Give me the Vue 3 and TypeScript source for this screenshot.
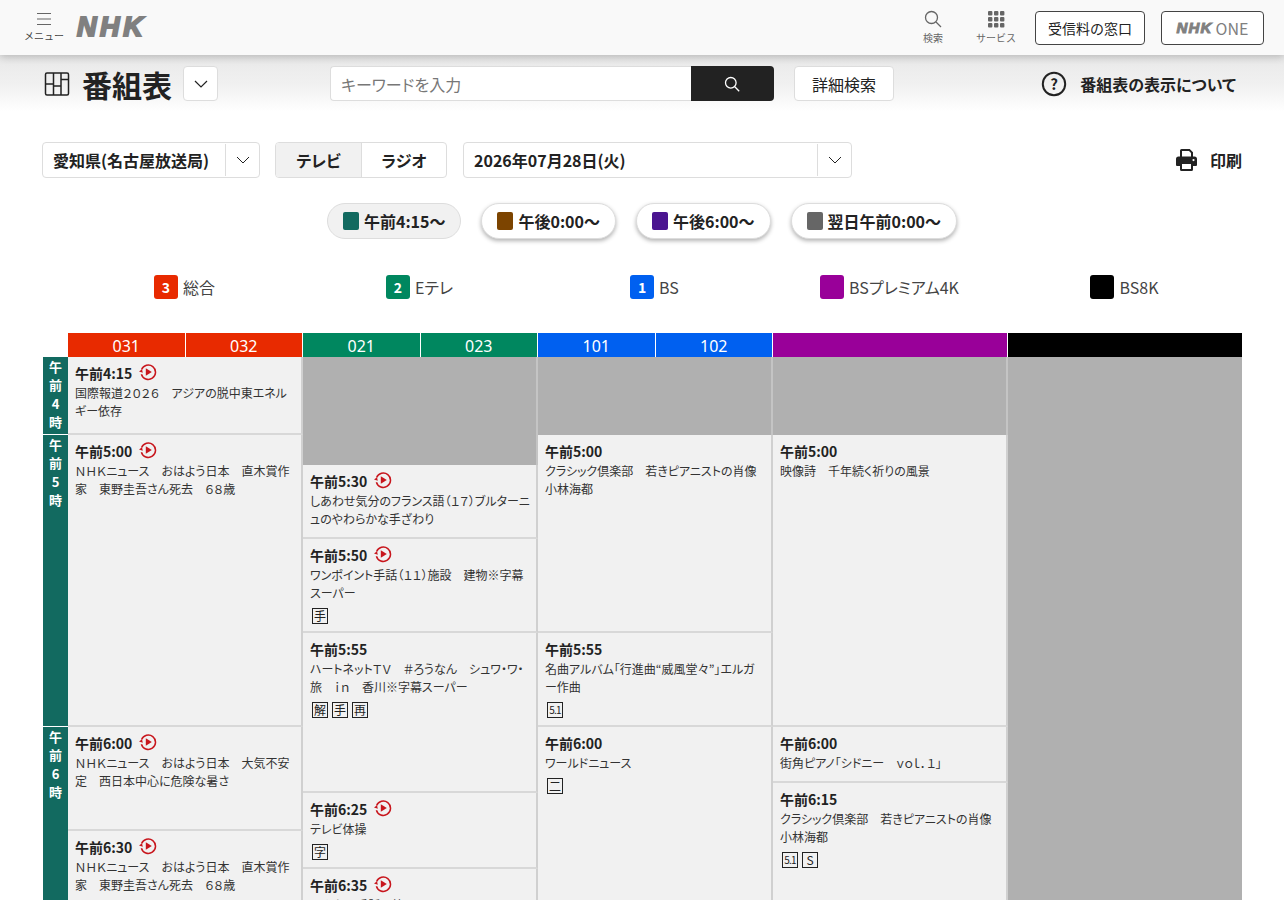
<script setup lang="ts">
interface Program {
  col: number
  from: string
  to: string
  time?: string
  title?: string
  replay?: boolean
  badges?: string[]
}

const rows = ['t415', 't500', 't530', 't550', 't555', 't600', 't615', 't625', 't630', 't635', 'end']
const rowHeights = [78, 30, 74, 94, 94, 56, 10, 38, 38, 38, 100]
const gridRows = rows.map((r, i) => `[${r}] ${rowHeights[i]}px`).join(' ') + ' [last]'

const hours = [
  { chars: ['午', '前', '4', '時'], from: 't415', to: 't500' },
  { chars: ['午', '前', '5', '時'], from: 't500', to: 't600' },
  { chars: ['午', '前', '6', '時'], from: 't600', to: 'last' },
]

const channels = [
  { color: '#e82a00', nums: ['031', '032'] },
  { color: '#00875f', nums: ['021', '023'] },
  { color: '#0060f0', nums: ['101', '102'] },
  { color: '#990099', nums: [] },
  { color: '#000000', nums: [] },
]

const legend = [
  { num: '3', name: '総合', color: '#e82a00' },
  { num: '2', name: 'Eテレ', color: '#00875f' },
  { num: '1', name: 'BS', color: '#0060f0' },
  { num: '', name: 'BSプレミアム4K', color: '#990099' },
  { num: '', name: 'BS8K', color: '#000000' },
]

const pills = [
  { label: '午前4:15〜', color: '#126a60', active: true },
  { label: '午後0:00〜', color: '#7c4400', active: false },
  { label: '午後6:00〜', color: '#4b1490', active: false },
  { label: '翌日午前0:00〜', color: '#666666', active: false },
]

const programs: Program[] = [
  { col: 1, from: 't415', to: 't500', time: '午前4:15', replay: true, title: '国際報道２０２６　アジアの脱中東エネルギー依存' },
  { col: 1, from: 't500', to: 't600', time: '午前5:00', replay: true, title: 'ＮＨＫニュース　おはよう日本　直木賞作家　東野圭吾さん死去　６８歳' },
  { col: 1, from: 't600', to: 't630', time: '午前6:00', replay: true, title: 'ＮＨＫニュース　おはよう日本　大気不安定　西日本中心に危険な暑さ' },
  { col: 1, from: 't630', to: 'last', time: '午前6:30', replay: true, title: 'ＮＨＫニュース　おはよう日本　直木賞作家　東野圭吾さん死去　６８歳' },
  { col: 2, from: 't415', to: 't530' },
  { col: 2, from: 't530', to: 't550', time: '午前5:30', replay: true, title: 'しあわせ気分のフランス語（１７）ブルターニュのやわらかな手ざわり' },
  { col: 2, from: 't550', to: 't555', time: '午前5:50', replay: true, title: 'ワンポイント手話（１１）施設　建物※字幕スーパー', badges: ['手'] },
  { col: 2, from: 't555', to: 't625', time: '午前5:55', title: 'ハートネットＴＶ　＃ろうなん　シュワ・ワ・旅　ｉｎ　香川※字幕スーパー', badges: ['解', '手', '再'] },
  { col: 2, from: 't625', to: 't635', time: '午前6:25', replay: true, title: 'テレビ体操', badges: ['字'] },
  { col: 2, from: 't635', to: 'last', time: '午前6:35', replay: true, title: 'みんなの手話　第１１回' },
  { col: 3, from: 't415', to: 't500' },
  { col: 3, from: 't500', to: 't555', time: '午前5:00', title: 'クラシック倶楽部　若きピアニストの肖像　小林海都' },
  { col: 3, from: 't555', to: 't600', time: '午前5:55', title: '名曲アルバム「行進曲“威風堂々”」エルガー作曲', badges: ['5.1'] },
  { col: 3, from: 't600', to: 'last', time: '午前6:00', title: 'ワールドニュース', badges: ['二'] },
  { col: 4, from: 't415', to: 't500' },
  { col: 4, from: 't500', to: 't600', time: '午前5:00', title: '映像詩　千年続く祈りの風景' },
  { col: 4, from: 't600', to: 't615', time: '午前6:00', title: '街角ピアノ「シドニー　ｖｏｌ．１」' },
  { col: 4, from: 't615', to: 'last', time: '午前6:15', title: 'クラシック倶楽部　若きピアニストの肖像　小林海都', badges: ['5.1', 'S'] },
  { col: 5, from: 't415', to: 'last' },
]

function cellStyle(p: { col?: number, from: string, to: string }) {
  return {
    gridColumn: p.col ? String(p.col + 1) : '1',
    gridRow: `${p.from} / ${p.to}`,
  }
}
</script>

<template>
  <div class="page">
    <header class="topbar">
      <div class="topbar__left">
        <div class="nav-item nav-item--menu">
          <svg width="16" height="14" viewBox="0 0 16 14" fill="none" stroke="#666" stroke-width="1.2">
            <path d="M1 1.5h14M1 7h14M1 12.5h14" />
          </svg>
          <span>メニュー</span>
        </div>
        <span class="logo">NHK</span>
      </div>
      <div class="topbar__right">
        <div class="nav-item nav-item--search">
          <svg width="18" height="18" viewBox="0 0 18 18" fill="none" stroke="#666" stroke-width="1.3">
            <circle cx="7.5" cy="7.5" r="6" />
            <path d="M12 12l5 5" />
          </svg>
          <span>検索</span>
        </div>
        <div class="nav-item nav-item--service">
          <svg width="18" height="18" viewBox="0 0 18 18" fill="#666">
            <rect v-for="n in 9" :key="n" :x="1 + ((n - 1) % 3) * 6" :y="1 + Math.floor((n - 1) / 3) * 6" width="4.4" height="4.4" rx="1" />
          </svg>
          <span>サービス</span>
        </div>
        <button class="top-btn top-btn--fee">受信料の窓口</button>
        <button class="top-btn top-btn--one"><span class="logo logo--small">NHK</span><span class="one">ONE</span></button>
      </div>
    </header>

    <section class="subhead">
      <div class="subhead__title">
        <svg width="26" height="26" viewBox="0 0 26 26" fill="none" stroke="#222" stroke-width="1.5">
          <rect x="1.5" y="2" width="23" height="22" rx="1.5" />
          <path d="M9.5 2v22M17 2v22M1.5 13h8M9.5 15h7.5M17 8.5h7.5" />
        </svg>
        <h1>番組表</h1>
        <button class="icon-btn">
          <svg width="14" height="8" viewBox="0 0 14 8" fill="none" stroke="#222" stroke-width="1.2"><path d="M1 1l6 6 6-6" /></svg>
        </button>
      </div>
      <div class="search">
        <input class="search__input" placeholder="キーワードを入力">
        <button class="search__btn">
          <svg width="16" height="16" viewBox="0 0 16 16" fill="none" stroke="#fff" stroke-width="1.3">
            <circle cx="6.8" cy="6.8" r="5.3" />
            <path d="M10.8 10.8l4.4 4.4" />
          </svg>
        </button>
      </div>
      <button class="detail-btn">詳細検索</button>
      <div class="about">
        <svg width="26" height="26" viewBox="0 0 26 26">
          <circle cx="13" cy="13" r="11.2" fill="none" stroke="#222" stroke-width="2" />
          <text x="13" y="18.5" text-anchor="middle" font-size="15" font-weight="700" fill="#222">?</text>
        </svg>
        <span>番組表の表示について</span>
      </div>
    </section>

    <section class="controls">
      <div class="select select--area">
        <span class="select__value">愛知県(名古屋放送局)</span>
        <span class="select__arrow">
          <svg width="14" height="8" viewBox="0 0 14 8" fill="none" stroke="#222" stroke-width="1"><path d="M1 1l6 6 6-6" /></svg>
        </span>
      </div>
      <div class="tabs">
        <span class="tabs__item tabs__item--active">テレビ</span>
        <span class="tabs__item">ラジオ</span>
      </div>
      <div class="select select--date">
        <span class="select__value">2026年07月28日(火)</span>
        <span class="select__arrow">
          <svg width="14" height="8" viewBox="0 0 14 8" fill="none" stroke="#222" stroke-width="1"><path d="M1 1l6 6 6-6" /></svg>
        </span>
      </div>
      <div class="print">
        <svg width="21" height="22" viewBox="0 0 21 22">
          <path fill="#222" d="M4 1.5A1.5 1.5 0 0 1 5.5 0h8.2L17 3.2V8h-2V4l-2-2H6v6H4z" />
          <path fill="#222" d="M2.5 7.5h16A2.5 2.5 0 0 1 21 10v6a1 1 0 0 1-1 1h-3v3.5a1.5 1.5 0 0 1-1.5 1.5h-10A1.5 1.5 0 0 1 4 20.5V17H1a1 1 0 0 1-1-1v-6a2.5 2.5 0 0 1 2.5-2.5zM6 15v5h9v-5zM17.5 10a1.1 1.1 0 1 0 0 2.2 1.1 1.1 0 0 0 0-2.2z" fill-rule="evenodd" />
        </svg>
        <span>印刷</span>
      </div>
    </section>

    <nav class="pills">
      <span v-for="p in pills" :key="p.label" class="pill" :class="{ 'pill--active': p.active }">
        <i class="pill__swatch" :style="{ background: p.color }" />{{ p.label }}
      </span>
    </nav>

    <div class="legend">
      <div v-for="l in legend" :key="l.name" class="legend__item">
        <span class="legend__badge" :style="{ background: l.color }">{{ l.num }}</span>
        <span>{{ l.name }}</span>
      </div>
    </div>

    <div class="table">
      <div class="channels">
        <div v-for="(c, i) in channels" :key="i" class="channel" :style="{ background: c.color }">
          <span v-for="n in c.nums" :key="n" class="channel__num">{{ n }}</span>
        </div>
      </div>
      <div class="schedule" :style="{ gridTemplateRows: gridRows }">
        <div v-for="h in hours" :key="h.from" class="hour" :style="cellStyle(h)">
          <span v-for="(c, i) in h.chars" :key="i">{{ c }}</span>
        </div>
        <template v-for="(p, i) in programs" :key="i">
          <article v-if="p.time" class="prog" :style="cellStyle(p)">
            <div class="prog__time">
              {{ p.time }}
              <svg v-if="p.replay" class="prog__replay" width="18" height="18" viewBox="0 0 18 18">
                <path d="M2.6 6.6A7.2 7.2 0 1 1 2.4 11.2" fill="none" stroke="#c8161d" stroke-width="1.5" />
                <path d="M0 8.6l3-2.4 0.8 3.6z" fill="#c8161d" />
                <path d="M6.8 5.2l6 3.8-6 3.8z" fill="#c8161d" />
              </svg>
            </div>
            <p class="prog__title">{{ p.title }}</p>
            <div v-if="p.badges" class="prog__badges">
              <span v-for="b in p.badges" :key="b" class="badge" :class="{ 'badge--tiny': b === '5.1' }">{{ b }}</span>
            </div>
          </article>
          <div v-else class="blank" :class="{ 'blank--last': p.col === 5 }" :style="cellStyle(p)" />
        </template>
      </div>
    </div>
  </div>
</template>

<style>
html, body {
  margin: 0;
  overflow: hidden;
}
</style>

<style scoped>
.page {
  height: 900px;
  overflow: hidden;
  background: #fff;
  color: #222;
  font-family: "Noto Sans CJK JP", "Noto Sans", sans-serif;
  font-feature-settings: "palt";
}

button {
  font-family: inherit;
  font-feature-settings: inherit;
  cursor: pointer;
}

.topbar {
  position: relative;
  z-index: 2;
  display: flex;
  align-items: center;
  justify-content: space-between;
  height: 55px;
  padding: 0 20px 0 24px;
  box-sizing: border-box;
  background: #f9f9f9;
  box-shadow: 0 2px 8px rgba(0, 0, 0, 0.22);
}

.topbar__left,
.topbar__right {
  display: flex;
  align-items: center;
}

.nav-item {
  display: flex;
  flex-direction: column;
  align-items: center;
  gap: 3px;
  font-feature-settings: normal;
  font-size: 10px;
  line-height: 14px;
  color: #666;
}

.nav-item--menu {
  width: 40px;
  color: #444;
}

.nav-item--search {
  margin-right: 33px;
}

.nav-item--service {
  margin-right: 19px;
}

.logo {
  margin-left: 13px;
  font-family: "Liberation Sans", sans-serif;
  font-size: 27px;
  font-style: italic;
  font-weight: 700;
  line-height: 1;
  letter-spacing: 3.6px;
  color: #808080;
  -webkit-text-stroke: 2px #808080;
}

.logo--small {
  margin-left: 0;
  font-size: 15px;
  letter-spacing: 1.2px;
  -webkit-text-stroke: 1px #808080;
}

.one {
  margin-left: 3px;
  font-size: 16px;
  color: #808080;
}

.top-btn {
  display: flex;
  align-items: center;
  justify-content: center;
  height: 34px;
  padding: 0;
  border: 1px solid #444;
  border-radius: 4px;
  background: #fff;
  font-feature-settings: normal;
  font-size: 14px;
  color: #222;
}

.top-btn--fee {
  width: 110px;
  margin-right: 16px;
}

.top-btn--one {
  width: 103px;
}

.subhead {
  display: flex;
  align-items: center;
  height: 57px;
  padding: 0 48px 0 44px;
  box-sizing: border-box;
  background: linear-gradient(#e9e9e9, #f0f0f0 50%, #fff);
}

.subhead__title {
  display: flex;
  align-items: center;
  width: 286px;
}

.subhead__title h1 {
  margin: 0 11px 0 12px;
  font-size: 30px;
  font-weight: 700;
  line-height: 40px;
  color: #222;
}

.icon-btn {
  display: flex;
  align-items: center;
  justify-content: center;
  width: 35px;
  height: 35px;
  padding: 0;
  border: 1px solid #ddd;
  border-radius: 4px;
  background: #fff;
}

.search {
  display: flex;
  height: 35px;
  margin-right: 20px;
}

.search__input {
  width: 361px;
  padding: 0 10px;
  box-sizing: border-box;
  border: 1px solid #ddd;
  border-right: none;
  border-radius: 4px 0 0 4px;
  background: #fff;
  font-family: inherit;
  font-feature-settings: inherit;
  font-size: 16px;
  outline: none;
}

.search__input::placeholder {
  color: #777;
}

.search__btn {
  display: flex;
  align-items: center;
  justify-content: center;
  width: 83px;
  padding: 0 2px 0 0;
  border: none;
  border-radius: 0 4px 4px 0;
  background: #222;
}

.detail-btn {
  width: 100px;
  height: 35px;
  padding: 0;
  border: 1px solid #ddd;
  border-radius: 4px;
  background: #fff;
  font-size: 16px;
  color: #222;
}

.about {
  display: flex;
  align-items: center;
  gap: 13px;
  margin-left: auto;
  font-size: 16px;
  font-weight: 700;
}

.controls {
  display: flex;
  align-items: center;
  height: 36px;
  margin-top: 30px;
  padding: 0 42px;
}

.select {
  display: flex;
  height: 36px;
  box-sizing: border-box;
  border: 1px solid #ddd;
  border-radius: 4px;
  background: #fff;
}

.select--area {
  width: 218px;
  margin-right: 15px;
}

.select--date {
  width: 389px;
  margin-left: 16px;
}

.select__value {
  flex: 1;
  padding-left: 10px;
  font-size: 16px;
  font-weight: 700;
  line-height: 35px;
}

.select__arrow {
  display: flex;
  align-items: center;
  justify-content: center;
  width: 33px;
  margin: 1px 0;
  border-left: 1px solid #ddd;
}

.tabs {
  display: flex;
  width: 172px;
  height: 36px;
  box-sizing: border-box;
  border: 1px solid #ddd;
  border-radius: 4px;
  overflow: hidden;
}

.tabs__item {
  flex: 1;
  font-size: 16px;
  font-weight: 700;
  line-height: 34px;
  text-align: center;
}

.tabs__item--active {
  flex: 0 0 85px;
  border-right: 1px solid #ddd;
  background: #f1f1f1;
}

.print {
  display: flex;
  align-items: center;
  gap: 13px;
  margin-left: auto;
  font-size: 16px;
  font-weight: 700;
}

.pills {
  display: flex;
  justify-content: center;
  gap: 20px;
  margin-top: 25px;
}

.pill {
  display: flex;
  align-items: center;
  gap: 5px;
  height: 36px;
  padding: 0 15px;
  box-sizing: border-box;
  border: 1px solid #ddd;
  border-radius: 18px;
  background: #fff;
  box-shadow: 0 2px 4px rgba(0, 0, 0, 0.3);
  font-size: 16px;
  font-weight: 700;
}

.pill--active {
  background: #f1f1f1;
  box-shadow: none;
}

.pill__swatch {
  width: 16px;
  height: 18px;
  border-radius: 2px;
}

.legend {
  display: grid;
  grid-template-columns: repeat(5, 235px);
  margin-top: 36px;
  padding-left: 67px;
}

.legend__item {
  display: flex;
  align-items: center;
  justify-content: center;
  gap: 5px;
  height: 24px;
  font-size: 16px;
  color: #444;
}

.legend__badge {
  width: 24px;
  height: 24px;
  border-radius: 3px;
  font-size: 14px;
  font-weight: 700;
  line-height: 24px;
  text-align: center;
  color: #fff;
}

.table {
  margin-top: 34px;
  padding-left: 43px;
}

.channels {
  display: grid;
  grid-template-columns: repeat(4, 235px) 234px;
  height: 24px;
  margin-left: 25px;
}

.channel {
  display: flex;
  margin-right: 1px;
}

.channel:last-child {
  margin-right: 0;
}

.channel__num {
  flex: 1;
  font-family: "Noto Sans", sans-serif;
  font-size: 16px;
  line-height: 26px;
  text-align: center;
  color: #fff;
}

.channel__num + .channel__num {
  border-left: 1px solid #fff;
}

.schedule {
  display: grid;
  grid-template-columns: 25px repeat(4, 235px) 234px;
}

.hour {
  display: flex;
  flex-direction: column;
  align-items: center;
  padding-top: 1px;
  box-sizing: border-box;
  border-bottom: 1px solid #fff;
  background: #126a60;
  font-size: 13px;
  font-weight: 700;
  line-height: 18.4px;
  color: #fff;
}

.prog {
  padding: 5px 6px 0 7px;
  box-sizing: border-box;
  border-right: 2px solid #d0d0d0;
  border-bottom: 2px solid #d8d8d8;
  background: #f1f1f1;
  min-width: 0;
}

.prog__time {
  display: flex;
  align-items: center;
  gap: 7px;
  height: 22px;
  font-size: 14px;
  font-weight: 700;
  line-height: 22px;
}

.prog__replay {
  margin-top: -3px;
}

.prog__title {
  margin: 0;
  font-size: 12px;
  line-height: 18px;
  line-break: loose;
  color: #333;
}

.prog__badges {
  display: flex;
  gap: 4px;
  margin-top: 6px;
  padding-left: 2px;
}

.badge {
  display: flex;
  align-items: center;
  justify-content: center;
  width: 16px;
  height: 16px;
  box-sizing: border-box;
  border: 1px solid #222;
  font-size: 12px;
  line-height: 14px;
}

.badge--tiny {
  font-size: 10px;
  letter-spacing: -0.8px;
}

.blank {
  box-sizing: border-box;
  border-right: 2px solid #c4c4c4;
  background: #b0b0b0;
}

.blank--last {
  border-right: none;
}
</style>
